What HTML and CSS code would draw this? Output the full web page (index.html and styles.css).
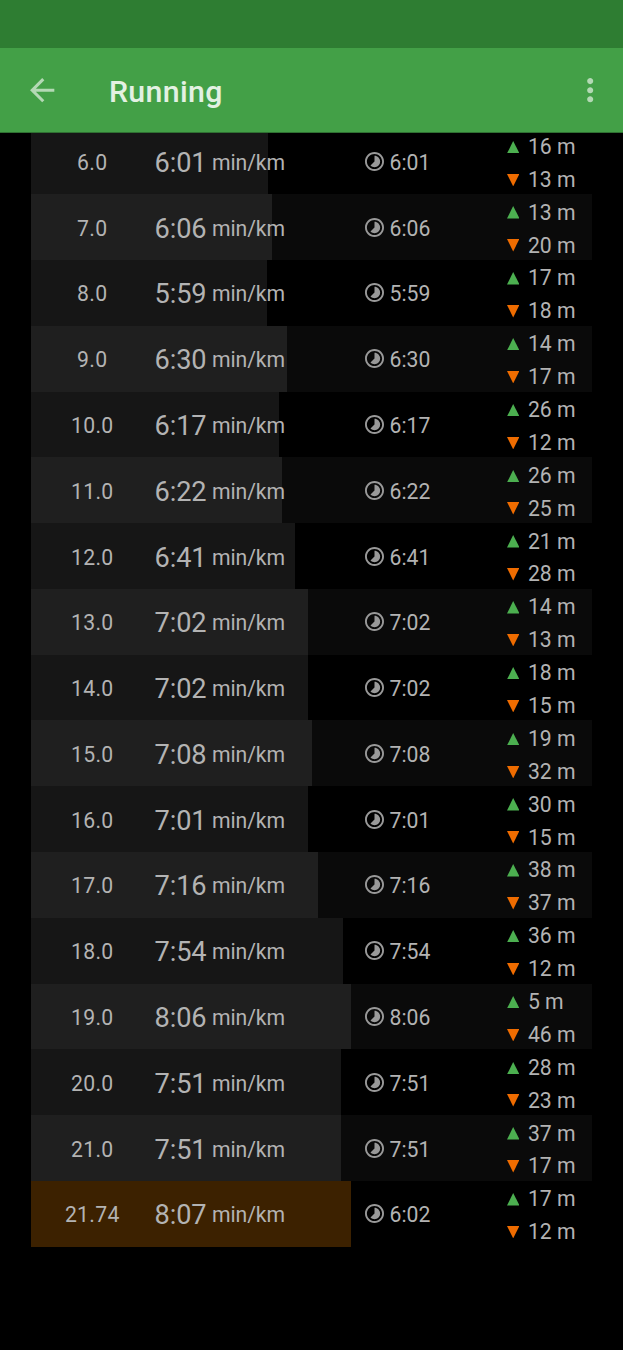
FILE: index.html
```
<!DOCTYPE html>
<html lang="en">
<head>
    <meta charset="UTF-8">
    <meta name="viewport" content="width=device-width, initial-scale=1.0">
    <title>Running</title>
    <link rel="stylesheet" href="styles.css">
</head>
<body>
    <div class="status-bar"></div>
    <header class="toolbar">
        <svg class="back" viewBox="0 0 24 24"><path d="M20 11H7.83l5.59-5.59L12 4l-8 8 8 8 1.41-1.41L7.83 13H20v-2z"/></svg>
        <h1>Running</h1>
        <svg class="more" viewBox="0 0 24 24"><path d="M12 8c1.1 0 2-.9 2-2s-.9-2-2-2-2 .9-2 2 .9 2 2 2zm0 2c-1.1 0-2 .9-2 2s.9 2 2 2 2-.9 2-2-.9-2-2-2zm0 6c-1.1 0-2 .9-2 2s.9 2 2 2 2-.9 2-2-.9-2-2-2z"/></svg>
    </header>
    <main class="viewport">
        <div class="laps" id="laps"></div>
    </main>

    <script>
        // distance, pace, time, ascent, descent
        const laps = [
            ['6.0', '6:01', '6:01', 16, 13],
            ['7.0', '6:06', '6:06', 13, 20],
            ['8.0', '5:59', '5:59', 17, 18],
            ['9.0', '6:30', '6:30', 14, 17],
            ['10.0', '6:17', '6:17', 26, 12],
            ['11.0', '6:22', '6:22', 26, 25],
            ['12.0', '6:41', '6:41', 21, 28],
            ['13.0', '7:02', '7:02', 14, 13],
            ['14.0', '7:02', '7:02', 18, 15],
            ['15.0', '7:08', '7:08', 19, 32],
            ['16.0', '7:01', '7:01', 30, 15],
            ['17.0', '7:16', '7:16', 38, 37],
            ['18.0', '7:54', '7:54', 36, 12],
            ['19.0', '8:06', '8:06', 5, 46],
            ['20.0', '7:51', '7:51', 28, 23],
            ['21.0', '7:51', '7:51', 37, 17],
            ['21.74', '8:07', '6:02', 17, 12]
        ];

        function seconds(pace) {
            const [min, sec] = pace.split(':').map(Number);
            return min * 60 + sec;
        }

        // Slower pace = longer bar
        function barWidth(pace) {
            return (seconds(pace) * 0.1173).toFixed(2);
        }

        document.getElementById('laps').innerHTML = laps.map(([distance, pace, time, up, down]) => `
            <div class="lap">
                <div class="bar" style="width: ${barWidth(pace)}%"></div>
                <div class="distance">${distance}</div>
                <div class="pace">${pace}<span class="unit">min/km</span></div>
                <div class="time">
                    <svg class="clock" viewBox="2 2 20 20"><path d="M16.24 7.76C15.07 6.59 13.54 6 12 6v6l-4.24 4.24c2.34 2.34 6.14 2.34 8.49 0 2.34-2.34 2.34-6.14-.01-8.48zM12 2C6.48 2 2 6.48 2 12s4.48 10 10 10 10-4.48 10-10S17.52 2 12 2zm0 18c-4.42 0-8-3.58-8-8s3.58-8 8-8 8 3.58 8 8-3.58 8-8 8z"/></svg>
                    <span>${time}</span>
                </div>
                <div class="elevation">
                    <div><svg class="up" viewBox="0 0 12 12"><path d="M6 0L12 12H0Z"/></svg>${up} m</div>
                    <div><svg class="down" viewBox="0 0 12 12"><path d="M0 0H12L6 12Z"/></svg>${down} m</div>
                </div>
            </div>`).join('');
    </script>
</body>
</html>
```
FILE: styles.css
```
* {
    box-sizing: border-box;
}
body {
    margin: 0;
    height: 1350px;
    display: flex;
    flex-direction: column;
    overflow: hidden;
    font-family: Roboto, sans-serif;
    font-size: 21.2px;
    color: #b3b3b3;
    background-color: #000;
}
.status-bar {
    flex: none;
    height: 48px;
    background-color: #2e7d32;
}
.toolbar {
    flex: none;
    display: flex;
    align-items: center;
    height: 85px;
    padding: 0 15px 0 24px;
    background-color: #43a047;
    border-bottom: 1px solid #2f7032;
}
.toolbar svg {
    width: 36.4px;
    height: 36.4px;
    fill: #b4d9b5;
}
h1 {
    flex: 1;
    margin: 3px 0 0 48.5px;
    font-size: 30.3px;
    font-weight: 500;
    letter-spacing: 0.35px;
    color: #e3f1e3;
}
.viewport {
    flex: 1;
    display: flex;
    flex-direction: column;
    justify-content: flex-end;
    overflow: hidden;
    padding: 0 31px 103.3px 30.5px;
}
.lap {
    position: relative;
    display: grid;
    grid-template-columns: 123.5px 211px 142px 1fr;
    align-items: center;
    height: 65.79px;
}
.lap > div {
    position: relative;
}
.lap:nth-child(even) {
    background-color: #0a0a0a;
}
.lap > .bar {
    position: absolute;
    top: 0;
    bottom: 0;
    left: 0;
    background-color: #161616;
}
.lap:nth-child(even) .bar {
    background-color: #1f1f1f;
}
.lap:last-child .bar {
    background-color: #3c2100;
}
.distance {
    padding-top: 2px;
    text-align: center;
    letter-spacing: 0.3px;
}
.pace {
    display: flex;
    align-items: center;
    padding: 3px 0 0 0.5px;
    font-size: 27.2px;
    letter-spacing: -0.1px;
    white-space: nowrap;
}
.unit {
    margin: 0 0 1px 5.5px;
    font-size: 21.2px;
}
.time {
    display: flex;
    align-items: center;
    gap: 5.5px;
}
.time span {
    padding-top: 2px;
}
.clock {
    width: 19px;
    height: 19px;
    fill: #999;
}
.elevation div {
    display: flex;
    align-items: center;
    height: 32.89px;
    padding-top: 3px;
}
.elevation svg {
    width: 12.4px;
    height: 12.4px;
    margin: 1px 8.5px 0 0;
}
.up {
    fill: #4caf50;
}
.down {
    fill: #ef6c00;
}
```
